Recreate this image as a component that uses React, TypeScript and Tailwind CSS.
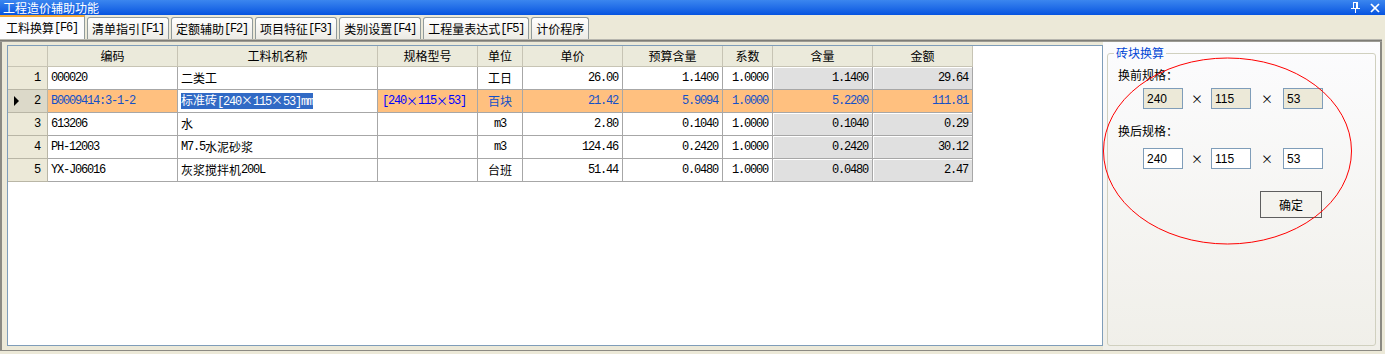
import React from "react";

const T = ({ s }: { s: string }) => {
  const parts = s.split(/([\x20-\x7e]+)/).filter((p) => p.length > 0);
  return (
    <>
      {parts.map((p, i) =>
        /^[\x20-\x7e]+$/.test(p) ? (
          <span key={i} className="font-['Liberation_Mono'] text-[12px] tracking-[-1.2px]">
            {p}
          </span>
        ) : (
          <span key={i} className="font-['Noto_Sans_CJK_SC']">
            {p}
          </span>
        )
      )}
    </>
  );
};

const COLS = [
  "w-[40px]",
  "w-[130px]",
  "w-[200px]",
  "w-[100px]",
  "w-[45px]",
  "w-[100px]",
  "w-[100px]",
  "w-[50px]",
  "w-[100px]",
  "w-[100px]",
];

const ALIGN = [
  "",
  "justify-start pl-[3px]",
  "justify-start pl-[3px]",
  "justify-start pl-[4px]",
  "justify-center",
  "justify-end pr-[4px]",
  "justify-end pr-[4px]",
  "justify-end pr-[4px]",
  "justify-end pr-[4px]",
  "justify-end pr-[4px]",
];

const HEAD = ["", "编码", "工料机名称", "规格型号", "单位", "单价", "预算含量", "系数", "含量", "金额"];

const ROWS: string[][] = [
  ["1", "000020", "二类工", "", "工日", "26.00", "1.1400", "1.0000", "1.1400", "29.64"],
  ["2", "B0009414:3-1-2", "标准砖[240×115×53]mm", "[240×115×53]", "百块", "21.42", "5.9094", "1.0000", "5.2200", "111.81"],
  ["3", "613206", "水", "", "m3", "2.80", "0.1040", "1.0000", "0.1040", "0.29"],
  ["4", "PH-12003", "M7.5水泥砂浆", "", "m3", "124.46", "0.2420", "1.0000", "0.2420", "30.12"],
  ["5", "YX-J06016", "灰浆搅拌机200L", "", "台班", "51.44", "0.0480", "1.0000", "0.0480", "2.47"],
];

const TABS = ["清单指引[F1]", "定额辅助[F2]", "项目特征[F3]", "类别设置[F4]", "工程量表达式[F5]", "计价程序"];

function Cell({ r, c, v }: { r: number; c: number; v: string }) {
  const base = `shrink-0 flex items-center border-r border-b leading-[14px] whitespace-nowrap overflow-hidden ${COLS[c]}`;
  if (c === 0) {
    const sel = r === 1;
    return (
      <div
        className={`${base} border-[#b9b6a6] pr-[7px] ${
          sel ? "bg-[#dcd9c9] justify-between pl-[6px]" : "bg-[#ece9d8] justify-end"
        }`}
      >
        {sel && (
          <svg width="6" height="10" viewBox="0 0 6 10">
            <path d="M0 0 L5 5 L0 10Z" fill="#000" />
          </svg>
        )}
        <T s={v} />
      </div>
    );
  }
  let bg = "bg-white";
  let color = "text-black";
  if (r === 1) {
    bg = c === 2 ? "bg-white" : "bg-[#ffc07f]";
    color = c === 3 ? "text-[#0000ff]" : "text-[#1450c8]";
  } else if (c === 8 || c === 9) {
    bg = "bg-[#e0e0e0] shadow-[inset_1px_1px_0_#ffffff]";
  }
  return (
    <div className={`${base} ${ALIGN[c]} border-[#a7a7a7] ${bg} ${color}`}>
      {r === 1 && c === 2 ? (
        <span className="bg-[#316ac5] text-white leading-[13px]">
          <T s={v} />
        </span>
      ) : (
        <T s={v} />
      )}
    </div>
  );
}

function SpecBox({ v, ro }: { v: string; ro?: boolean }) {
  return (
    <div
      className={`w-[40px] h-[21px] shrink-0 border border-[#7f9db9] flex items-center pl-[3px] font-['Liberation_Sans'] text-[12px] ${
        ro ? "bg-[#ece9d8]" : "bg-white"
      }`}
    >
      {v}
    </div>
  );
}

function SpecRow({ ro }: { ro?: boolean }) {
  return (
    <div className="flex items-center ml-[35px]">
      <SpecBox v="240" ro={ro} />
      <div className="w-[28px] text-center leading-[14px]">×</div>
      <SpecBox v="115" ro={ro} />
      <div className="w-[32px] text-center leading-[14px]">×</div>
      <SpecBox v="53" ro={ro} />
    </div>
  );
}

export default function App() {
  return (
    <div className="w-[1385px] h-[354px] bg-[#ece9d8] overflow-hidden flex flex-col text-[12px] text-black font-['Noto_Sans_CJK_SC']">
      {/* title bar */}
      <div className="h-[15px] shrink-0 flex items-center justify-between bg-linear-to-b from-[#3b86ef] to-[#0553e0]">
        <div className="text-white text-[12px] leading-[15px] pl-[3px]">工程造价辅助功能</div>
        <div className="flex items-center gap-[9px] pr-[5px]">
          <svg width="10" height="11" viewBox="0 0 10 11" fill="none" stroke="#ffffff" strokeWidth="1">
            <rect x="2.5" y="0.5" width="4" height="6" />
            <line x1="5.5" y1="0.5" x2="5.5" y2="6.5" />
            <line x1="0" y1="6.5" x2="9" y2="6.5" />
            <line x1="4.5" y1="7" x2="4.5" y2="11" />
          </svg>
          <svg width="10" height="10" viewBox="0 0 10 10" fill="none" stroke="#ffffff" strokeWidth="1.7">
            <line x1="1" y1="1" x2="9" y2="9" />
            <line x1="9" y1="1" x2="1" y2="9" />
          </svg>
        </div>
      </div>

      {/* tabs */}
      <div className="h-[24px] shrink-0 flex items-end">
        <div className="h-[24px] px-[6px] bg-[#fcfcfe] border-r border-[#919b9c] border-t-2 border-t-[#f5a834] flex items-center leading-[14px]">
          <T s="工料换算[F6]" />
        </div>
        {TABS.map((t) => (
          <div
            key={t}
            className="h-[22px] ml-[2px] px-[4px] border border-b-0 border-[#919b9c] rounded-t-[3px] bg-linear-to-b from-[#ffffff] to-[#ecebe5] flex items-center leading-[14px]"
          >
            <T s={t} />
          </div>
        ))}
      </div>

      {/* separator */}
      <div className="h-[3px] shrink-0 border-t border-b border-t-[#b7b6ae] border-b-[#9c9b94] bg-[#7e7d77] mr-[3px]" />

      {/* content frame */}
      <div className="h-[309px] shrink-0 flex mr-[3px] border-l-2 border-r-2 border-b border-[#8b8a83] pl-[5px]">
        <div className="pt-[3px] pb-[4px] shrink-0">
          <div className="w-[1096px] h-full border border-[#7f9db9] bg-white overflow-hidden">
            <div className="flex h-[21px]">
              {HEAD.map((h, i) => (
                <div
                  key={i}
                  className={`shrink-0 flex items-center justify-center border-r border-b border-[#c7c4b4] leading-[14px] ${COLS[i]} ${
                    i === 0 ? "bg-[#ece9d8]" : "bg-[#ebeadb]"
                  }`}
                >
                  {h}
                </div>
              ))}
            </div>
            {ROWS.map((row, r) => (
              <div key={r} className="flex h-[23px]">
                {row.map((v, c) => (
                  <Cell key={c} r={r} c={c} v={v} />
                ))}
              </div>
            ))}
          </div>
        </div>

        {/* right panel */}
        <div className="relative flex-1 flex flex-col bg-linear-to-b from-[#fcfcfe] to-[#f0efe9]">
          <fieldset className="flex-1 min-w-0 mx-[4px] mt-[4px] mb-[4px] border border-[#d0d0bf] rounded-[3px]">
            <legend className="ml-[6px] px-[2px] text-[#0046d5] leading-[14px]">砖块换算</legend>
            <div className="pl-[10px] mt-[8px] leading-[14px] h-[14px]">换前规格：</div>
            <div className="mt-[6px]">
              <SpecRow ro />
            </div>
            <div className="pl-[10px] mt-[15px] leading-[14px] h-[14px]">换后规格：</div>
            <div className="mt-[10px]">
              <SpecRow />
            </div>
            <div className="mt-[22px] ml-[152px] w-[62px] h-[27px] border border-[#5e5e5e] bg-[#f4f3ee] flex items-center justify-center leading-[14px]">
              确定
            </div>
          </fieldset>
          <svg className="absolute left-0 top-0 w-full h-full pointer-events-none overflow-visible">
            <ellipse cx="124.5" cy="109" rx="124" ry="93" fill="none" stroke="#ff0000" strokeWidth="1" />
          </svg>
        </div>
      </div>
    </div>
  );
}
